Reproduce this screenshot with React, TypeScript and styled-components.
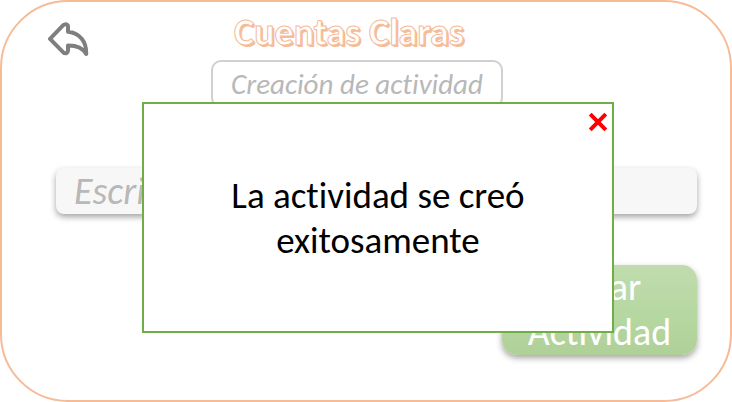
import { useState } from "react";
import styled, { createGlobalStyle } from "styled-components";

const GlobalStyle = createGlobalStyle`
  *, *::before, *::after { box-sizing: border-box; }
  body {
    margin: 0;
    background: #fff;
    font-family: Carlito, Lato, sans-serif;
    font-variant-ligatures: none;
  }
  button, input { font-family: inherit; font-variant-ligatures: inherit; }
`;

const Screen = styled.main`
  position: relative;
  min-height: 100vh;
  border: 2px solid #f6bb97;
  border-radius: 68px;
  background: #fff;
  overflow: hidden;
`;

const Header = styled.header`
  display: grid;
  grid-template-columns: 41px 1fr 41px;
  padding: 12px 64px 0 46px;
`;

const BackButton = styled.button`
  align-self: start;
  margin-top: 6px;
  padding: 0;
  border: 0;
  background: none;
  line-height: 0;
  cursor: pointer;
`;

const Heading = styled.div`
  display: flex;
  flex-direction: column;
  align-items: center;
`;

const Title = styled.h1`
  margin: 0;
  padding-right: 16px;
  font-size: 38px;
  line-height: 36px;
  font-weight: 700;
  color: #fff;
  -webkit-text-stroke: 1px #f6bb97;
  text-shadow: 1px 1px 0 #f6bb97, 2px 2px 0 #f6bb97;
`;

const Subtitle = styled.h2`
  margin: 10px 0 0;
  width: 292px;
  border: 2px solid #d0d0d0;
  border-radius: 10px;
  text-align: center;
  font-size: 29px;
  line-height: 44px;
  font-weight: 400;
  font-style: italic;
  color: #b8b8b8;
  white-space: nowrap;
`;

const Form = styled.form`
  display: flex;
  flex-direction: column;
  align-items: flex-end;
  gap: 51px;
  padding: 60px 33px 44px 54px;
`;

const NameInput = styled.input`
  width: 100%;
  height: 46px;
  padding: 0 18px;
  border: 0;
  border-radius: 8px;
  background: #f7f7f7;
  box-shadow: 0 3px 6px rgba(0, 0, 0, 0.36);
  font-size: 38px;
  font-style: italic;
  &::placeholder { color: #b8b8b8; opacity: 1; }
`;

const SubmitButton = styled.button`
  width: 195px;
  height: 90px;
  padding: 0 16px;
  border: 0;
  border-radius: 15px;
  background: linear-gradient(#c0dcae, #b5d7a0 60%, #afd198);
  box-shadow: 0 3px 6px rgba(0, 0, 0, 0.36);
  color: #fff;
  font-size: 38px;
  line-height: 45px;
  cursor: pointer;
`;

const Dialog = styled.section`
  position: absolute;
  top: 100px;
  left: 140px;
  right: 116px;
  min-height: 231px;
  display: flex;
  align-items: center;
  justify-content: center;
  padding: 0 64px;
  border: 2px solid #70ad47;
  background: #fff;
`;

const Message = styled.p`
  margin: 0;
  text-align: center;
  font-size: 37px;
  line-height: 45px;
  color: #000;
`;

const CloseButton = styled.button`
  position: absolute;
  top: 8px;
  right: 4px;
  padding: 0;
  border: 0;
  background: none;
  line-height: 0;
  cursor: pointer;
`;

export default function App() {
  const [open, setOpen] = useState(true);
  return (
    <>
      <GlobalStyle />
      <Screen>
        <Header>
          <BackButton type="button" aria-label="Volver">
            <svg width="41" height="38" viewBox="0 0 41 38" fill="none" stroke="#7f7f7f" strokeWidth="4" strokeLinejoin="round">
              <path d="M2 18.8 L15 5.4 Q17.5 3.4 19.5 5 Q20.2 5.6 20 7 V11.8 C32 13 38.6 22 38.2 34 C34.5 27.8 28.5 25.5 20 25.6 V30.4 Q20 32.5 18.5 33.2 Q16.6 33.8 14.8 31.8 Z" />
            </svg>
          </BackButton>
          <Heading>
            <Title>Cuentas Claras</Title>
            <Subtitle>Creación de actividad</Subtitle>
          </Heading>
        </Header>
        <Form onSubmit={(e) => { e.preventDefault(); setOpen(true); }}>
          <NameInput type="text" aria-label="Actividad" placeholder="Escribir" />
          <SubmitButton type="submit">Crear Actividad</SubmitButton>
        </Form>
        {open && (
          <Dialog role="dialog" aria-labelledby="message">
            <CloseButton type="button" aria-label="Cerrar" onClick={() => setOpen(false)}>
              <svg width="20" height="20" viewBox="0 0 20 20" stroke="#f00" strokeWidth="4" fill="none">
                <path d="M2.2 2.2 L17.8 17.8 M17.8 2.2 L2.2 17.8" />
              </svg>
            </CloseButton>
            <Message id="message">La actividad se creó exitosamente</Message>
          </Dialog>
        )}
      </Screen>
    </>
  );
}
